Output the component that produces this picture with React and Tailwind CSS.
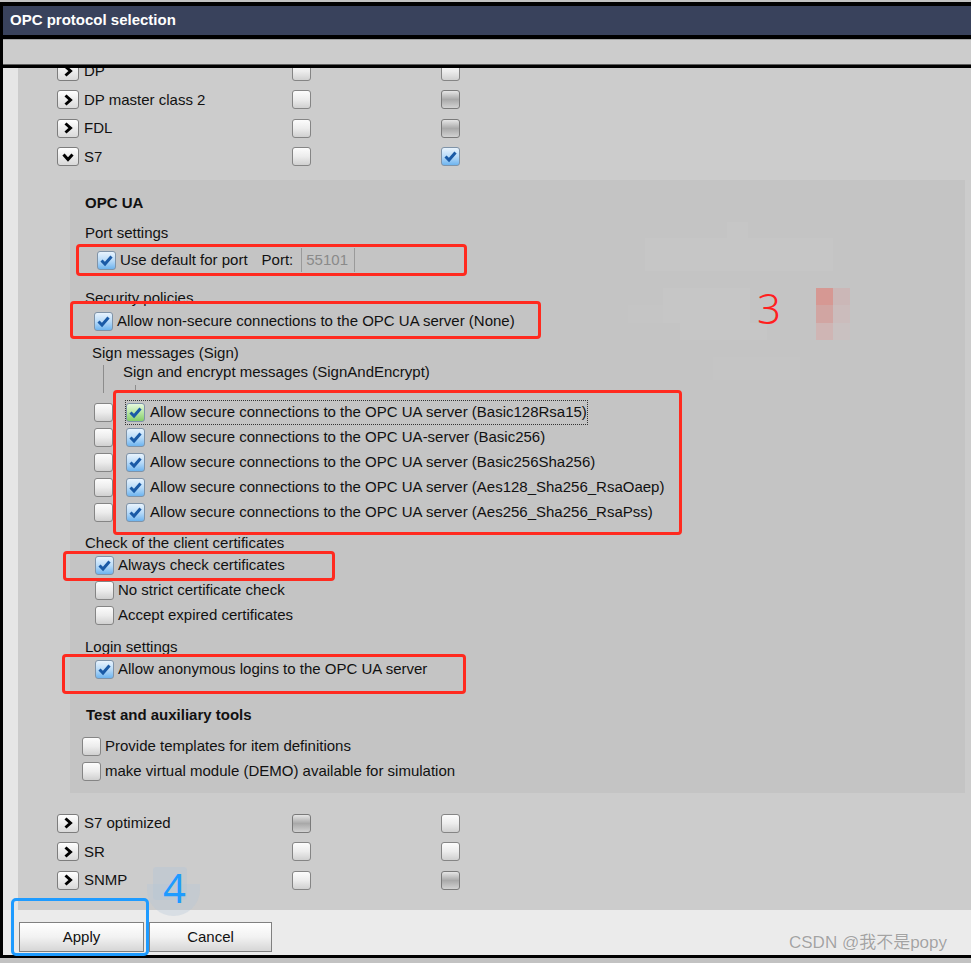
import React from 'react';

const boxStyles = {
  off: 'border-[#858585] from-[#fcfcfc] via-[#ececec] to-[#d0d0d0]',
  dark: 'border-[#7a7a7a] from-[#e6e6e6] via-[#a9a9a9] to-[#d2d2d2]',
  on: 'border-[#7f93a8] from-[#e8f3fd] via-[#b9dbf8] to-[#6db4ef]',
  green: 'border-[#7f93a8] from-[#e6f8dd] via-[#b8e6a4] to-[#84cd68]',
};

const Check = ({ v = 'off' }) => (
  <span
    className={`w-[19px] h-[19px] shrink-0 rounded-[3px] border bg-linear-to-b flex items-center justify-center ${boxStyles[v]}`}
  >
    {(v === 'on' || v === 'green') && (
      <svg width="15" height="15" viewBox="0 0 15 15">
        <path d="M2.5 7.5 L6 11 L12.5 3.5" fill="none" stroke="#1a5aa6" strokeWidth="3" />
      </svg>
    )}
  </span>
);

const Toggle = ({ open }) => (
  <span className="w-[22px] h-[19px] shrink-0 rounded-[3px] border border-[#7d7d7d] bg-linear-to-b from-white to-[#d9d9d9] flex items-center justify-center">
    <svg width="14" height="14" viewBox="0 0 14 14">
      {open ? (
        <path d="M2.5 4.5 L7 9.5 L11.5 4.5" fill="none" stroke="#000" strokeWidth="3" />
      ) : (
        <path d="M4.5 2.5 L9.5 7 L4.5 11.5" fill="none" stroke="#000" strokeWidth="3" />
      )}
    </svg>
  </span>
);

const ProtoRow = ({ name, open, a = 'off', b = 'off' }) => (
  <div className="h-[28.5px] flex items-center">
    <div className="w-[235px] flex items-center gap-[5px]">
      <Toggle open={open} />
      <span>{name}</span>
    </div>
    <div className="w-[149px] flex">
      <Check v={a} />
    </div>
    <Check v={b} />
  </div>
);

const Option = ({ v, label, pad, gap = 'ml-[4px]', h = 'h-[25px]' }) => (
  <div className={`${h} flex items-center ${pad}`}>
    <Check v={v} />
    <span className={gap}>{label}</span>
  </div>
);

const secure = [
  'Allow secure connections to the OPC UA server (Basic128Rsa15)',
  'Allow secure connections to the OPC UA-server (Basic256)',
  'Allow secure connections to the OPC UA server (Basic256Sha256)',
  'Allow secure connections to the OPC UA server (Aes128_Sha256_RsaOaep)',
  'Allow secure connections to the OPC UA server (Aes256_Sha256_RsaPss)',
];

export default function App() {
  return (
    <div className="relative w-[971px] h-[963px] overflow-hidden bg-[#c2c2c2] pt-[2px] font-['Liberation_Sans',Arial,sans-serif] text-[15px] text-[#111]">
      <div className="border-l-[3px] border-t-[4px] border-b-[3px] border-black flex flex-col">
        <div className="h-[29px] bg-[#39425c] flex items-center pl-[7px] text-white font-bold">
          OPC protocol selection
        </div>
        <div className="h-[4px] bg-black" />
        <div className="h-[26px] bg-[#cccccc] border-t border-t-[#a4a4a4] border-b border-b-[#5c5c5c]" />
        <div className="h-[3px] bg-black" />

        <div className="h-[842px] flex">
          <div className="w-[15px] bg-[#e6e6e6]" />
          <div className="flex-1 bg-[#cccccc] overflow-hidden">
            <div className="mt-[-11px] pl-[39px]">
              <ProtoRow name="DP" />
              <ProtoRow name="DP master class 2" b="dark" />
              <ProtoRow name="FDL" b="dark" />
              <ProtoRow name="S7" open b="on" />
            </div>

            <div className="ml-[52px] mr-[6px] mt-[9px] bg-[#c4c4c4] pt-[13px] pb-[9px] relative">
              <div className="h-[20px] flex items-center pl-[15px] font-bold">OPC UA</div>
              <div className="mt-[10px] h-[20px] flex items-center pl-[15px]">Port settings</div>
              <div className="mt-[5px] h-[24px] flex items-center pl-[27px]">
                <Check v="on" />
                <span className="ml-[4px]">Use default for port</span>
                <span className="ml-[14px]">Port:</span>
                <span className="ml-[8px] w-[54px] h-[24px] border-x border-[#9a9a9a] flex items-center pl-[4px] text-[#8a8a8a]">
                  55101
                </span>
              </div>

              <div className="mt-[16px] h-[20px] flex items-center pl-[15px]">Security policies</div>
              <Option v="on" pad="pl-[24px] mt-[1px]" h="h-[24px]" label="Allow non-secure connections to the OPC UA server (None)" />

              <div className="mt-[11px] h-[18px] flex items-center pl-[22px]">Sign messages (Sign)</div>
              <div className="ml-[33px] mt-[3px] h-[28px] border-l border-[#8c8c8c] pl-[19px] flex flex-col">
                <div className="h-[15px] flex items-center">Sign and encrypt messages (SignAndEncrypt)</div>
                <div className="ml-[12px] mt-[5px] h-[8px] border-l border-[#8c8c8c]" />
              </div>

              <div className="mt-[7px]">
                {secure.map((t, i) => (
                  <div key={t} className="h-[25px] flex items-center pl-[24px]">
                    <Check v="off" />
                    <span
                      className={`ml-[13px] flex items-center ${i === 0 ? 'outline-1 outline-dotted outline-[#333]' : ''}`}
                    >
                      <Check v={i === 0 ? 'green' : 'on'} />
                      <span className="ml-[5px]">{t}</span>
                    </span>
                  </div>
                ))}
              </div>

              <div className="mt-[8px] h-[20px] flex items-center pl-[15px]">Check of the client certificates</div>
              <Option v="on" pad="pl-[25px]" label="Always check certificates" />
              <Option v="off" pad="pl-[25px]" label="No strict certificate check" />
              <Option v="off" pad="pl-[25px]" label="Accept expired certificates" />

              <div className="mt-[9px] h-[20px] flex items-center pl-[15px]">Login settings</div>
              <Option v="on" pad="pl-[25px]" h="h-[24px]" label="Allow anonymous logins to the OPC UA server" />

              <div className="mt-[24px] h-[20px] flex items-center pl-[16px] font-bold">Test and auxiliary tools</div>
              <div className="mt-[9px]">
                <Option v="off" pad="pl-[12px]" label="Provide templates for item definitions" />
                <Option v="off" pad="pl-[12px]" label="make virtual module (DEMO) available for simulation" />
              </div>
            </div>

            <div className="mt-[16px] pl-[39px]">
              <ProtoRow name="S7 optimized" a="dark" />
              <ProtoRow name="SR" />
              <ProtoRow name="SNMP" b="dark" />
            </div>
          </div>
        </div>

        <div className="h-[45px] bg-[#ebebeb] flex items-start pt-[12px] pl-[16px] gap-[5px]">
          <button className="w-[125px] h-[30px] border border-[#808080] bg-linear-to-b from-white via-[#f2f2f2] to-[#d6d6d6] text-[#111]">
            Apply
          </button>
          <button className="w-[123px] h-[30px] border border-[#808080] bg-linear-to-b from-white via-[#f2f2f2] to-[#d6d6d6] text-[#111]">
            Cancel
          </button>
        </div>
      </div>

      {/* mosaic near the note */}
      <div className="absolute left-[645px] top-[238px] w-[188px] h-[33px] bg-[#c6c6c6]" />
      <div className="absolute left-[727px] top-[222px] w-[21px] h-[16px] bg-[#c6c6c6]" />
      <div className="absolute left-[663px] top-[288px] w-[87px] h-[35px] bg-[#c6c6c6]" />
      <div className="absolute left-[628px] top-[305px] w-[35px] h-[18px] bg-[#c5c5c5]" />
      <div className="absolute left-[680px] top-[323px] w-[87px] h-[17px] bg-[#c6c6c6]" />
      <div className="absolute left-[713px] top-[357px] w-[87px] h-[23px] bg-[#c5c5c5]" />
      <div className="absolute left-[816px] top-[288px] w-[34px] h-[52px] grid grid-cols-2 grid-rows-3">
        <span className="bg-[#d69893]" />
        <span className="bg-[#cbb7b7]" />
        <span className="bg-[#d1a5a2]" />
        <span className="bg-[#cbbcbc]" />
        <span className="bg-[#cfb5b4]" />
        <span className="bg-[#c9c1c1]" />
      </div>

      {/* annotations */}
      <div className="absolute left-[757px] top-[284px] text-[42px] leading-[48px] font-light text-[#ff1f1f] font-['Noto_Sans',sans-serif]">
        3
      </div>
      <div className="absolute left-[76px] top-[244px] w-[391px] h-[32px] border-[3px] border-[#ff2a1f] rounded-[4px]" />
      <div className="absolute left-[70px] top-[301px] w-[471px] h-[38px] border-[3px] border-[#ff2a1f] rounded-[4px]" />
      <div className="absolute left-[113px] top-[390px] w-[569px] h-[145px] border-[3px] border-[#ff2a1f] rounded-[4px]" />
      <div className="absolute left-[63px] top-[551px] w-[272px] h-[30px] border-[3px] border-[#ff2a1f] rounded-[4px]" />
      <div className="absolute left-[62px] top-[654px] w-[404px] h-[40px] border-[3px] border-[#ff2a1f] rounded-[4px]" />

      <div className="absolute left-[153px] top-[867px] w-[34px] h-[33px] rounded-[3px] bg-[#b4c6d8]/40" />
      <div className="absolute left-[147px] top-[884px] w-[53px] h-[32px] rounded-b-full bg-[#b4c6d8]/35" />
      <div className="absolute left-[163px] top-[866px] text-[40px] leading-[44px] text-[#1e9bff] font-['Noto_Sans',sans-serif]">
        4
      </div>
      <div className="absolute left-[11px] top-[898px] w-[138px] h-[58px] border-[3px] border-[#1e9bff] rounded-[5px]" />

      <div className="absolute left-[789px] top-[932px] text-[17px] leading-[22px] text-[#a3a3a3] font-['Liberation_Sans','Noto_Sans_CJK_SC',sans-serif] [text-shadow:0_0_1px_#ffffff]">
        CSDN @我不是popy
      </div>
    </div>
  );
}
